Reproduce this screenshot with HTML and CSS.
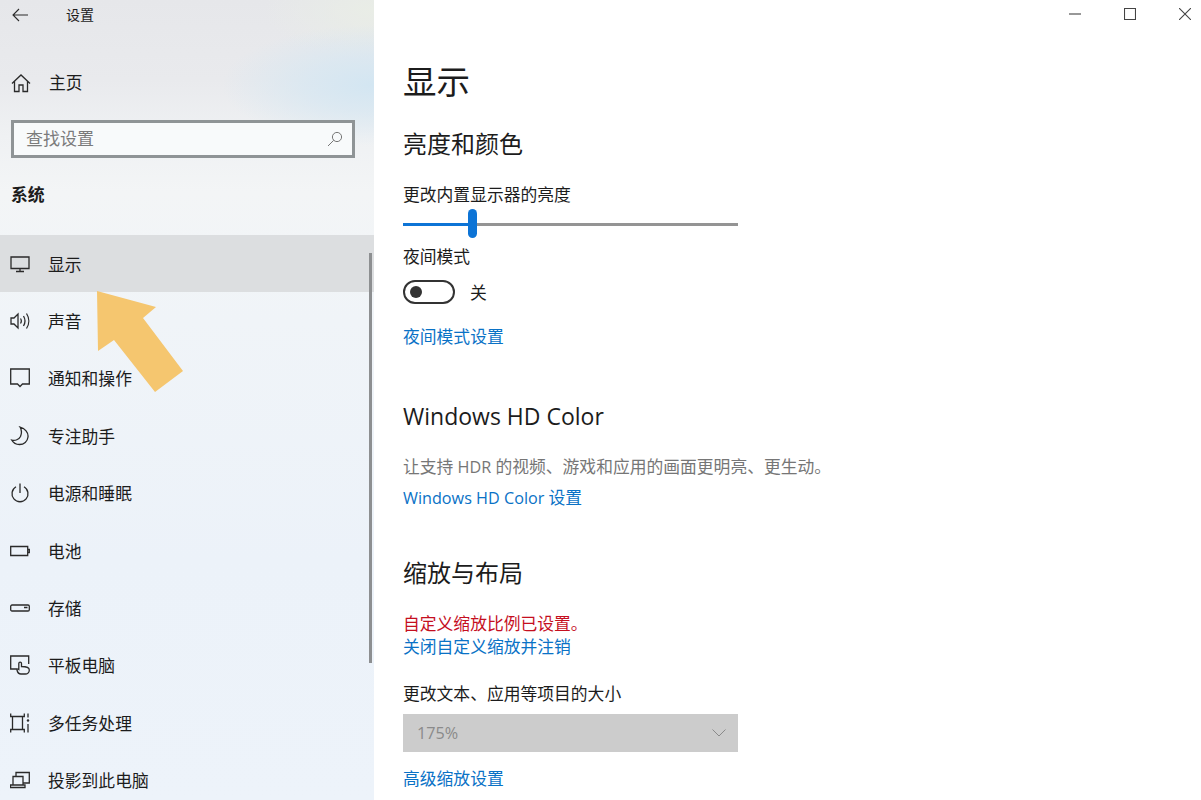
FILE: index.html
```html
<!DOCTYPE html>
<html lang="zh-CN">
<head>
<meta charset="utf-8">
<title>设置</title>
<link rel="stylesheet" href="styles.css">
</head>
<body>
<div class="window">
  <aside class="sidebar">
    <div class="topbar">
      <svg class="back" viewBox="0 0 16 14"><path d="M7 1 1 7l6 6M1 7h15"/></svg>
      <span class="app-title">设置</span>
    </div>
    <div class="home">
      <svg class="icon" viewBox="0 0 20 20"><path d="M1 10.500 10 2l9 8.500M3.500 8.500v10h4.500v-6.500h4v6.500h4.500v-10"/></svg>
      <span>主页</span>
    </div>
    <div class="search">
      <span class="search-text">查找设置</span>
      <svg class="search-icon" viewBox="0 0 16 16"><circle cx="10" cy="6" r="4.600"/><path d="M6.700 9.300 1 15"/></svg>
    </div>
    <div class="section">系统</div>
    <nav class="nav">
      <div class="item active">
        <svg class="icon" viewBox="0 0 20 20"><path d="M1 3h18v11.500H1zM10 14.500v3M6 17.500h8"/></svg>
        <span>显示</span>
      </div>
      <div class="item">
        <svg class="icon" viewBox="0 0 20 20"><path d="M1 7h3l4-4v14l-4-4H1zM10.500 7.500c1 1.500 1 3.500 0 5M13.500 5c1.800 3 1.800 7 0 10M16.500 2.500c3 4.500 3 10.500 0 15"/></svg>
        <span>声音</span>
      </div>
      <div class="item">
        <svg class="icon" viewBox="0 0 20 20"><path d="M.7 1h18.600v15h-6.800L10 18.500 7.500 16H.7z"/></svg>
        <span>通知和操作</span>
      </div>
      <div class="item">
        <svg class="icon" viewBox="0 0 20 20"><path d="M10 1c5 1.500 8.500 5.500 8 10-.5 4.500-4 7.500-8.500 7.500-3.200 0-6.200-1.500-7.800-4.500 3.500 1 7.300-.5 8.800-3.500 1.200-3 1.500-6.500-.5-9.500z"/></svg>
        <span>专注助手</span>
      </div>
      <div class="item">
        <svg class="icon" viewBox="0 0 20 20"><path d="M6 3.800a8 8 0 1 0 8 0M10 .5v9.500"/></svg>
        <span>电源和睡眠</span>
      </div>
      <div class="item">
        <svg class="icon" viewBox="0 0 20 20"><path d="M.7 5.500h17v9H.7zM17.700 8.500h1.600v3h-1.600"/></svg>
        <span>电池</span>
      </div>
      <div class="item">
        <svg class="icon" viewBox="0 0 20 20"><path d="M2 7h16a1.300 1.300 0 0 1 1.300 1.300v3.400A1.300 1.300 0 0 1 18 13H2A1.300 1.300 0 0 1 .7 11.700V8.300A1.300 1.300 0 0 1 2 7zM14 9.500h3.500"/></svg>
        <span>存储</span>
      </div>
      <div class="item">
        <svg class="icon" viewBox="0 0 20 20"><path d="M7 14H.7V1h18v8M11 19c-2.500 0-3.500-1.500-4-4-.2-1 .6-1.500 1.800-.6V8.500c0-1.800 2.700-1.800 2.700 0v3c3.500 0 7.800.5 7.800 3.500 0 2.500-2 4-4 4z"/></svg>
        <span>平板电脑</span>
      </div>
      <div class="item">
        <svg class="icon" viewBox="0 0 20 20"><path d="M.7.5v3h13.600v-3M.7 19.500v-3h13.600v3M2.500 3.500v13M12.500 3.500v13M18 .5v4M18 11v8.500"/><circle class="dot" cx="18" cy="7.500" r="1.200"/></svg>
        <span>多任务处理</span>
      </div>
      <div class="item">
        <svg class="icon" viewBox="0 0 20 20"><path d="M6 6V2.500h13.300v10.500H13M3 6.500h10v8.500H3zM.5 15h14.500v2.500H.5z"/></svg>
        <span>投影到此电脑</span>
      </div>
    </nav>
    <div class="scrollbar"></div>
    <svg class="arrow" viewBox="0 0 90 105"><polygon points="1,1 60,17 47,28 87,81 59,102 18,50 2,61"/></svg>
  </aside>
  <main class="main">
    <div class="controls">
      <svg class="ctl" viewBox="0 0 12 12"><path d="M0 6h12"/></svg>
      <svg class="ctl" viewBox="0 0 12 12"><path d="M.5.500h11v11H.5z"/></svg>
      <svg class="ctl" viewBox="0 0 12 12"><path d="M0 0l12 12M12 0 0 12"/></svg>
    </div>
    <h1 class="page-title">显示</h1>
    <h2 class="heading h-brightness">亮度和颜色</h2>
    <div class="text brightness-label">更改内置显示器的亮度</div>
    <div class="slider"><span class="slider-fill"></span><span class="slider-thumb"></span></div>
    <div class="text night-label">夜间模式</div>
    <div class="toggle-row">
      <span class="toggle"><span class="knob"></span></span>
      <span class="text toggle-label">关</span>
    </div>
    <a class="text link night-link">夜间模式设置</a>
    <h2 class="heading latin h-hdr">Windows HD Color</h2>
    <div class="text muted hdr-text">让支持<span class="small-latin"> HDR </span>的视频、游戏和应用的画面更明亮、更生动。</div>
    <a class="text link hdr-link"><span class="small-latin">Windows HD Color </span>设置</a>
    <h2 class="heading h-scale">缩放与布局</h2>
    <div class="text warning">自定义缩放比例已设置。</div>
    <a class="text link signout">关闭自定义缩放并注销</a>
    <div class="text size-label">更改文本、应用等项目的大小</div>
    <div class="select">
      <span class="small-latin">175%</span>
      <svg class="chevron" viewBox="0 0 14 8"><path d="M.5.500 7 7 13.500.500"/></svg>
    </div>
    <a class="text link adv-link">高级缩放设置</a>
  </main>
</div>
</body>
</html>
```

FILE: styles.css
```css
* { box-sizing: border-box; }
html, body { margin: 0; height: 100%; background: #fff; }
body {
  overflow: hidden;
  color: #1c1c1c;
  font-family: "Open Sans", "Noto Sans CJK SC", sans-serif;
  font-size: 16.8px;
  line-height: 24px;
}
.window { display: flex; height: 800px; }

/* Sidebar */
.sidebar {
  position: relative;
  flex: 0 0 374px;
  height: 800px;
  overflow: hidden;
  background:
    radial-gradient(ellipse 150px 60px at 372px 85px, #d3e6f2 0%, rgba(214,231,242,.7) 45%, rgba(232,238,242,0) 100%),
    radial-gradient(ellipse 110px 50px at 374px 10px, #e9ede6 0%, rgba(233,237,230,0) 100%),
    linear-gradient(180deg, #e6e7ea 0%, #e9eaed 10%, #eff1f3 17%, #f3f5f6 24%, #f0f4f8 40%, #ecf2f9 70%, #edf3fa 100%);
}
.topbar { display: flex; align-items: center; height: 29px; padding-left: 12px; }
.back { width: 16px; height: 14px; fill: none; stroke: #2b2b2b; stroke-width: 1.1; }
.app-title { margin-left: 38px; font-size: 14px; line-height: 29px; }
.home { display: flex; align-items: center; height: 30px; margin-top: 39px; padding-left: 11px; }
.icon { width: 20px; height: 20px; flex: none; fill: none; stroke: #2a2a2a; stroke-width: 1.3; }
.dot { fill: #2a2a2a; stroke: none; }
.home span { margin-left: 18px; }
.search {
  display: flex;
  align-items: center;
  justify-content: space-between;
  width: 344px;
  height: 38px;
  margin: 22px 0 0 11px;
  padding: 0 9px 0 12px;
  border: 3px solid #8f9496;
  background: #f8fafb;
}
.search-text { color: #7b7b7b; font-size: 17px; }
.search-icon { width: 16px; height: 16px; fill: none; stroke: #777; stroke-width: 1; }
.section { margin: 25px 0 0 11px; height: 24px; font-weight: 700; font-size: 16.800px; }
.nav { margin-top: 28px; }
.item { display: flex; align-items: center; height: 57.400px; padding-left: 10px; }
.item span { margin-left: 18px; padding-top: 2px; }
.item.active { background: #dcdee0; }
.scrollbar { position: absolute; left: 369px; top: 253px; width: 3px; height: 410px; background: #8d8f91; }
.arrow { position: absolute; left: 95.500px; top: 289.500px; width: 90px; height: 105px; fill: #f5c66f; }

/* Main */
.main { position: relative; flex: 1; padding-left: 29px; }
.controls { position: absolute; top: 8px; right: 10px; display: flex; gap: 43px; }
.ctl { width: 12px; height: 12px; fill: none; stroke: #444; stroke-width: 1.1; }
.page-title { margin: 0; padding-top: 60px; font-size: 33.500px; line-height: 42px; font-weight: 400; }
.heading { margin: 0; font-size: 24px; line-height: 32px; font-weight: 400; }
.h-brightness { margin-top: 26px; }
.text { display: block; }
.brightness-label { margin-top: 23px; height: 24px; }
.slider { position: relative; width: 335px; height: 3px; margin-top: 16px; background: #949494; }
.slider-fill { position: absolute; left: 0; top: 0; width: 69px; height: 3px; background: #0d74d6; }
.slider-thumb { position: absolute; left: 65px; top: -14px; width: 9px; height: 29px; border-radius: 5px; background: #0d74d6; }
.night-label { margin-top: 19px; }
.toggle-row { display: flex; align-items: center; gap: 15px; margin-top: 10px; height: 25px; }
.toggle { display: flex; align-items: center; width: 52px; height: 24px; padding-left: 5px; border: 2px solid #333; border-radius: 12px; }
.knob { width: 12px; height: 12px; border-radius: 50%; background: #333; }
.toggle-label { padding-top: 2px; }
.link { color: #0a72c6; }
.night-link { margin-top: 21px; }
.h-hdr { margin-top: 51px; }
.latin { font-family: "Open Sans", sans-serif; font-size: 23px; }
.small-latin { font-size: 16.200px; }
.muted { color: #767676; }
.hdr-text { margin-top: 23px; }
.hdr-link { margin-top: 7px; }
.h-scale { margin-top: 47px; }
.warning { margin-top: 23px; color: #c50f1f; }
.signout { margin-top: -1px; }
.size-label { margin-top: 23px; }
.select {
  display: flex;
  align-items: center;
  justify-content: space-between;
  width: 335px;
  height: 38px;
  margin-top: 8px;
  padding: 0 12px 0 14px;
  background: #cccccc;
  color: #8a8a8a;
}
.chevron { width: 14px; height: 8px; fill: none; stroke: #8a8a8a; stroke-width: 1; }
.adv-link { margin-top: 15px; }
```
